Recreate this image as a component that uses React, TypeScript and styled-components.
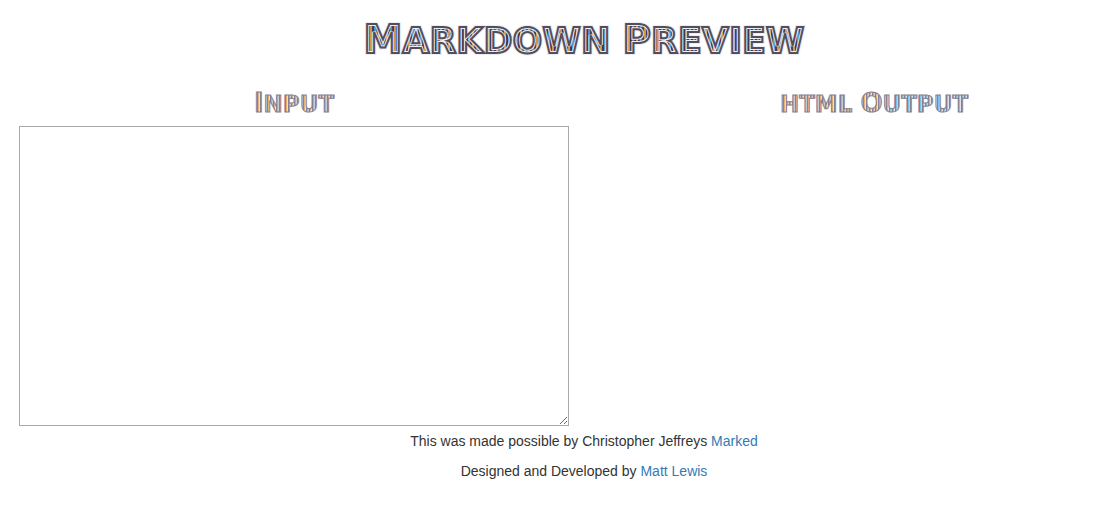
import React, { useState } from "react";
import styled, { createGlobalStyle } from "styled-components";

const GlobalStyle = createGlobalStyle`
  *, *::before, *::after { box-sizing: border-box; }
  body {
    margin: 0;
    overflow-x: hidden;
    background: #fff;
    color: #333;
    font: 14px/20px "Liberation Sans", Arial, sans-serif;
  }
`;

const Page = styled.div`
  min-width: 1168px;
  padding: 20px 4px;
`;

const Title = styled.h1`
  margin: 0;
  text-align: center;
  font: bold 35px/40px "DejaVu Sans", sans-serif;
`;

const Subtitle = styled.h2`
  margin: 29px 0 9px;
  text-align: center;
  font: bold 23px/26px "DejaVu Sans", sans-serif;
`;

/* Retro lettering: coloured pinstripes inside a light band and a thin outline. */
const Neon = styled.span<{ $size?: number; $large?: boolean }>`
  position: relative;
  display: inline-block;
  text-transform: uppercase;
  line-height: inherit;
  font-size: ${(p) => (p.$size ? `${p.$size}px` : "inherit")};
  color: transparent;
  background: ${(p) =>
    p.$large
      ? "repeating-linear-gradient(90deg, #3d3a5c 0 2px, #4a94d0 2px 4px, #4c404c 4px 6px, #d0924c 6px 8px)"
      : "repeating-linear-gradient(90deg, #8a7f9c 0 1px, #7cc0ec 1px 2px, #c4ccd4 2px 3px, #8c8490 3px 4px, #e8b06c 4px 5px, #dce4ea 5px 6px)"};
  -webkit-background-clip: text;
  background-clip: text;

  &::before,
  &::after {
    content: attr(data-text);
    position: absolute;
    left: 0;
    top: 0;
    color: transparent;
  }
  &::before {
    -webkit-text-stroke: ${(p) => (p.$large ? "4px #e9eff5" : "0")};
  }
  &::after {
    -webkit-text-stroke: ${(p) => (p.$large ? "2px #574c5a" : "1px #85808f")};
  }
`;

const Columns = styled.div`
  display: grid;
  grid-template-columns: 1fr 1fr;
`;

const Column = styled.section`
  padding: 0 15px;
`;

const Editor = styled.textarea`
  display: block;
  width: 100%;
  height: 300px;
  margin: 0;
  padding: 2px;
  border: 1px solid #a9a9a9;
  border-radius: 0;
  background: #fff;
  color: inherit;
  font: inherit;
  resize: both;
`;

const Output = styled.div`
  white-space: pre-wrap;
`;

const Footer = styled.footer`
  padding-top: 5px;
  text-align: center;
`;

const Credit = styled.p`
  margin: 0 0 10px;
`;

const Link = styled.a`
  color: #337ab7;
  text-decoration: none;
  &:hover { text-decoration: underline; }
`;

function Word({ text, cap, large }: { text: string; cap: number; large?: boolean }) {
  const first = text.slice(0, 1);
  const rest = text.slice(1);
  return (
    <>
      <Neon $size={cap} $large={large} data-text={first}>{first}</Neon>
      <Neon $large={large} data-text={rest}>{rest}</Neon>
    </>
  );
}

export default function App() {
  const [source, setSource] = useState("");
  return (
    <>
      <GlobalStyle />
      <Page>
        <Title>
          <Word text="Markdown" cap={39} large />{" "}
          <Word text="Preview" cap={39} large />
        </Title>
        <Columns>
          <Column>
            <Subtitle id="input-title"><Word text="Input" cap={26} /></Subtitle>
            <Editor
              aria-labelledby="input-title"
              value={source}
              onChange={(e) => setSource(e.target.value)}
            />
          </Column>
          <Column>
            <Subtitle>
              <Neon data-text="HTML">HTML</Neon>{" "}
              <Word text="Output" cap={26} />
            </Subtitle>
            <Output>{source}</Output>
          </Column>
        </Columns>
        <Footer>
          <Credit>
            This was made possible by Christopher Jeffreys{" "}
            <Link href="https://github.com/chjj/marked">Marked</Link>
          </Credit>
          <Credit>
            Designed and Developed by <Link href="#matt-lewis">Matt Lewis</Link>
          </Credit>
        </Footer>
      </Page>
    </>
  );
}
